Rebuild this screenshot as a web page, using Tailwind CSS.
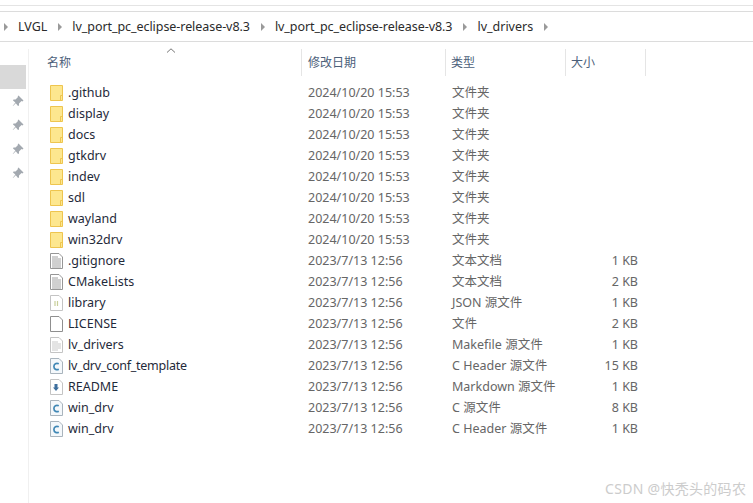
<!doctype html>
<html>
<head>
<meta charset="UTF-8" />
<script src="https://cdn.jsdelivr.net/npm/@tailwindcss/browser@4"></script>
</head>
<body class="bg-white">
<svg class="hidden">
  <symbol id="folder" viewBox="0 0 13 16">
    <path d="M.5 .5H12.500V15.500H.5Z" fill="#fde78f" stroke="#eec54f"/>
    <path d="M10.500 15.500V10.500H12.500" fill="none" stroke="#eec54f"/>
  </symbol>
  <symbol id="text" viewBox="0 0 13 16">
    <path d="M.5 .5H9L12.500 4V15.500H.5Z" fill="#fff" stroke="#969696"/>
    <path d="M2 4H8M2 6H11M2 8H11M2 10H11M2 12H11M2 14H11" stroke="#a0a0a0"/>
  </symbol>
  <symbol id="make" viewBox="0 0 13 16">
    <path d="M.5 .5H9L12.500 4V15.500H.5Z" fill="#fff" stroke="#c4c4c4"/>
    <path d="M2 5H8M2 7H11M2 9H11M2 11H11M2 13H8" stroke="#c9c9c9"/>
  </symbol>
  <symbol id="blank" viewBox="0 0 13 16">
    <path d="M.5 .5H9L12.500 4V15.500H.5Z" fill="#fff" stroke="#8f8f8f"/>
  </symbol>
  <symbol id="json" viewBox="0 0 13 16">
    <path d="M.5 .5H9L12.500 4V15.500H.5Z" fill="#fff" stroke="#c4c4c4"/>
    <path d="M5 6V11M7.500 6V11" stroke="#c8cf9a" stroke-width="1.200"/>
  </symbol>
  <symbol id="cfile" viewBox="0 0 13 16">
    <path d="M.5 .5H9L12.500 4V15.500H.5Z" fill="#f4f8fb" stroke="#a9b4bd"/>
    <path d="M8.800 5.800C6.300 4.600 3.900 6 3.900 8.500S6.300 12.400 8.800 11.200" fill="none" stroke="#3f87b5" stroke-width="1.700"/>
  </symbol>
  <symbol id="md" viewBox="0 0 13 16">
    <path d="M.5 .5H9L12.500 4V15.500H.5Z" fill="#fff" stroke="#c4c4c4"/>
    <path d="M4.500 5H7.500V8.500H9L6 12L3 8.500H4.500Z" fill="#3d6f9e"/>
  </symbol>
  <symbol id="pin" viewBox="0 0 12 12">
    <path d="M6.500 .5L11.500 5.500L10.500 6.500L9.500 6L7 8.500L7 10.500L6 11L3.800 8.200L1 11L.8 10.800L3.400 7.600L1 5.500L1.500 4.500L3.500 4.500L6 2L5.700 1.200Z" fill="#a3a9b0"/>
  </symbol>
</svg>

<div class="w-[753px] h-[503px] relative overflow-hidden bg-white text-[12.5px] leading-[21px] font-['Noto_Sans','Noto_Sans_CJK_SC',sans-serif]">
  <!-- ribbon edge -->
  <div class="h-[11px] pt-[5px]">
    <div class="h-[1px] bg-[#e4e4e4]"></div>
  </div>

  <!-- address bar -->
  <div class="h-[31px] border-t border-b border-[#dcdcdc] flex items-center text-[#2b2b2b]">
    <svg class="ml-[3px] w-[5px] h-[8px]" viewBox="0 0 5 8"><path d="M1 0L5 4L1 8Z" fill="#9a9a9a"/></svg>
    <span class="ml-[10px]">LVGL</span>
    <svg class="ml-[10px] w-[5px] h-[8px]" viewBox="0 0 5 8"><path d="M1 0L5 4L1 8Z" fill="#9a9a9a"/></svg>
    <span class="ml-[10px] tracking-[-0.06px]">lv_port_pc_eclipse-release-v8.3</span>
    <svg class="ml-[10px] w-[5px] h-[8px]" viewBox="0 0 5 8"><path d="M1 0L5 4L1 8Z" fill="#9a9a9a"/></svg>
    <span class="ml-[10px] tracking-[-0.06px]">lv_port_pc_eclipse-release-v8.3</span>
    <svg class="ml-[10px] w-[5px] h-[8px]" viewBox="0 0 5 8"><path d="M1 0L5 4L1 8Z" fill="#9a9a9a"/></svg>
    <span class="ml-[10px]">lv_drivers</span>
    <svg class="ml-[10px] w-[5px] h-[8px]" viewBox="0 0 5 8"><path d="M1 0L5 4L1 8Z" fill="#9a9a9a"/></svg>
  </div>

  <div class="flex">
    <!-- nav pane -->
    <div class="w-[29px] h-[461px] mt-[7px] border-r border-[#f0f0f0] shrink-0">
      <div class="w-[26px] h-[24px] mt-[16px] bg-[#d9d9d9]"></div>
      <div class="pl-[12px] flex flex-col gap-[12px] mt-[6px]">
        <svg class="w-[12px] h-[12px]"><use href="#pin"/></svg>
        <svg class="w-[12px] h-[12px]"><use href="#pin"/></svg>
        <svg class="w-[12px] h-[12px]"><use href="#pin"/></svg>
        <svg class="w-[12px] h-[12px]"><use href="#pin"/></svg>
      </div>
    </div>

    <!-- file list -->
    <div class="flex-1 min-w-0">
      <!-- column headers -->
      <div class="relative h-[40px] pt-[7px] text-[12px] text-[#4c607a]">
        <svg class="absolute left-[137px] top-[6px] w-[10px] h-[5px]" viewBox="0 0 10 5"><path d="M1 4.500L5 .8L9 4.500" fill="none" stroke="#777"/></svg>
        <div class="flex h-[27px] items-center">
          <div class="w-[273px] pl-[18px] h-full flex items-center border-r border-[#e5e5e5]">名称</div>
          <div class="w-[144px] pl-[6px] h-full flex items-center border-r border-[#e5e5e5]">修改日期</div>
          <div class="w-[120px] pl-[5px] h-full flex items-center border-r border-[#e5e5e5]">类型</div>
          <div class="w-[80px] pl-[5px] h-full flex items-center border-r border-[#e5e5e5]">大小</div>
        </div>
      </div>

      <div class="grid grid-cols-[272px_144px_120px_73px] auto-rows-[21px] text-[#666666]">
        <div class="flex items-center pl-[21px] text-[#1f2a3a]"><svg class="w-[13px] h-[16px] mr-[5px]"><use href="#folder"/></svg>.github</div><div class="pl-[7px]">2024/10/20 15:53</div><div class="pl-[7px]">文件夹</div><div></div>
        <div class="flex items-center pl-[21px] text-[#1f2a3a]"><svg class="w-[13px] h-[16px] mr-[5px]"><use href="#folder"/></svg>display</div><div class="pl-[7px]">2024/10/20 15:53</div><div class="pl-[7px]">文件夹</div><div></div>
        <div class="flex items-center pl-[21px] text-[#1f2a3a]"><svg class="w-[13px] h-[16px] mr-[5px]"><use href="#folder"/></svg>docs</div><div class="pl-[7px]">2024/10/20 15:53</div><div class="pl-[7px]">文件夹</div><div></div>
        <div class="flex items-center pl-[21px] text-[#1f2a3a]"><svg class="w-[13px] h-[16px] mr-[5px]"><use href="#folder"/></svg>gtkdrv</div><div class="pl-[7px]">2024/10/20 15:53</div><div class="pl-[7px]">文件夹</div><div></div>
        <div class="flex items-center pl-[21px] text-[#1f2a3a]"><svg class="w-[13px] h-[16px] mr-[5px]"><use href="#folder"/></svg>indev</div><div class="pl-[7px]">2024/10/20 15:53</div><div class="pl-[7px]">文件夹</div><div></div>
        <div class="flex items-center pl-[21px] text-[#1f2a3a]"><svg class="w-[13px] h-[16px] mr-[5px]"><use href="#folder"/></svg>sdl</div><div class="pl-[7px]">2024/10/20 15:53</div><div class="pl-[7px]">文件夹</div><div></div>
        <div class="flex items-center pl-[21px] text-[#1f2a3a]"><svg class="w-[13px] h-[16px] mr-[5px]"><use href="#folder"/></svg>wayland</div><div class="pl-[7px]">2024/10/20 15:53</div><div class="pl-[7px]">文件夹</div><div></div>
        <div class="flex items-center pl-[21px] text-[#1f2a3a]"><svg class="w-[13px] h-[16px] mr-[5px]"><use href="#folder"/></svg>win32drv</div><div class="pl-[7px]">2024/10/20 15:53</div><div class="pl-[7px]">文件夹</div><div></div>
        <div class="flex items-center pl-[21px] text-[#1f2a3a]"><svg class="w-[13px] h-[16px] mr-[5px]"><use href="#text"/></svg>.gitignore</div><div class="pl-[7px]">2023/7/13 12:56</div><div class="pl-[7px]">文本文档</div><div class="text-right">1 KB</div>
        <div class="flex items-center pl-[21px] text-[#1f2a3a]"><svg class="w-[13px] h-[16px] mr-[5px]"><use href="#text"/></svg>CMakeLists</div><div class="pl-[7px]">2023/7/13 12:56</div><div class="pl-[7px]">文本文档</div><div class="text-right">2 KB</div>
        <div class="flex items-center pl-[21px] text-[#1f2a3a]"><svg class="w-[13px] h-[16px] mr-[5px]"><use href="#json"/></svg>library</div><div class="pl-[7px]">2023/7/13 12:56</div><div class="pl-[7px]">JSON 源文件</div><div class="text-right">1 KB</div>
        <div class="flex items-center pl-[21px] text-[#1f2a3a]"><svg class="w-[13px] h-[16px] mr-[5px]"><use href="#blank"/></svg>LICENSE</div><div class="pl-[7px]">2023/7/13 12:56</div><div class="pl-[7px]">文件</div><div class="text-right">2 KB</div>
        <div class="flex items-center pl-[21px] text-[#1f2a3a]"><svg class="w-[13px] h-[16px] mr-[5px]"><use href="#make"/></svg>lv_drivers</div><div class="pl-[7px]">2023/7/13 12:56</div><div class="pl-[7px]">Makefile 源文件</div><div class="text-right">1 KB</div>
        <div class="flex items-center pl-[21px] text-[#1f2a3a] tracking-[-0.25px]"><svg class="w-[13px] h-[16px] mr-[5px]"><use href="#cfile"/></svg>lv_drv_conf_template</div><div class="pl-[7px]">2023/7/13 12:56</div><div class="pl-[7px]">C Header 源文件</div><div class="text-right">15 KB</div>
        <div class="flex items-center pl-[21px] text-[#1f2a3a]"><svg class="w-[13px] h-[16px] mr-[5px]"><use href="#md"/></svg>README</div><div class="pl-[7px]">2023/7/13 12:56</div><div class="pl-[7px]">Markdown 源文件</div><div class="text-right">1 KB</div>
        <div class="flex items-center pl-[21px] text-[#1f2a3a]"><svg class="w-[13px] h-[16px] mr-[5px]"><use href="#cfile"/></svg>win_drv</div><div class="pl-[7px]">2023/7/13 12:56</div><div class="pl-[7px]">C 源文件</div><div class="text-right">8 KB</div>
        <div class="flex items-center pl-[21px] text-[#1f2a3a]"><svg class="w-[13px] h-[16px] mr-[5px]"><use href="#cfile"/></svg>win_drv</div><div class="pl-[7px]">2023/7/13 12:56</div><div class="pl-[7px]">C Header 源文件</div><div class="text-right">1 KB</div>
      </div>
    </div>
  </div>

  <!-- watermark -->
  <div class="absolute left-[605px] top-[479px] text-[14px] leading-[20px] tracking-[0.3px] text-[#cccccc]">CSDN @快秃头的码农</div>
</div>
</body>
</html>
